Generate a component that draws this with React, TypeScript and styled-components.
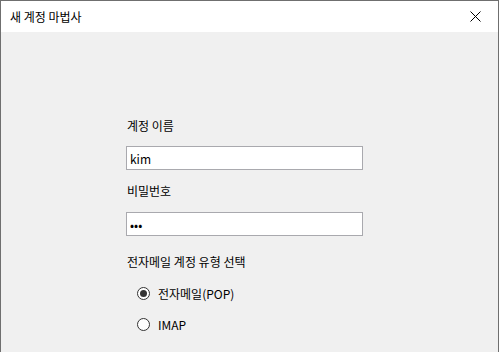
import React, { useState } from 'react';
import styled, { createGlobalStyle } from 'styled-components';

const GlobalStyle = createGlobalStyle`
  html, body {
    margin: 0;
    padding: 0;
    background: #ffffff;
  }
  * {
    box-sizing: border-box;
  }
`;

const font = `"Noto Sans CJK KR", "Noto Sans", sans-serif`;

const WindowFrame = styled.div`
  width: 499px;
  height: 352px;
  display: flex;
  flex-direction: column;
  border: 1px solid #6f6f6f;
  border-bottom: none;
  font-family: ${font};
  color: #000000;
  overflow: hidden;
`;

const TitleBar = styled.div`
  height: 31px;
  flex-shrink: 0;
  display: flex;
  align-items: center;
  justify-content: space-between;
  padding: 0 0 0 9px;
  background: #ffffff;
  font-size: 12px;
`;

const CloseButton = styled.button`
  width: 46px;
  height: 31px;
  border: none;
  background: transparent;
  display: flex;
  align-items: center;
  justify-content: center;
  padding: 0;
`;

const Body = styled.div`
  flex: 1;
  background: #f0f0f0;
  padding: 86px 0 0 125px;
`;

const Form = styled.div`
  width: 237px;
  display: flex;
  flex-direction: column;
`;

const Label = styled.div<{ $gap: number }>`
  font-size: 12px;
  line-height: 16px;
  height: 16px;
  margin-bottom: ${(p) => p.$gap}px;
  padding-left: 1px;
`;

const TextBox = styled.input<{ $gap: number }>`
  width: 237px;
  height: 24px;
  border: 1px solid #a9a9ae;
  background: #ffffff;
  font-family: ${font};
  font-size: 12px;
  padding: 0 3px;
  outline: none;
  color: #000000;
  margin-bottom: ${(p) => p.$gap}px;
`;

const RadioGroup = styled.div`
  display: flex;
  flex-direction: column;
  gap: 15px;
  padding-left: 11px;
  margin-top: 15px;
`;

const RadioRow = styled.label`
  display: flex;
  align-items: center;
  gap: 8px;
  height: 16px;
  font-size: 12px;
`;

const RadioCircle = styled.span<{ $checked: boolean }>`
  width: 13px;
  height: 13px;
  border-radius: 50%;
  border: 1px solid #333333;
  background: #ffffff;
  display: flex;
  align-items: center;
  justify-content: center;

  &::after {
    content: '';
    width: 7px;
    height: 7px;
    border-radius: 50%;
    background: ${(p) => (p.$checked ? '#333333' : 'transparent')};
  }
`;

const App: React.FC = () => {
  const [type, setType] = useState<string>('pop');

  return (
    <>
      <GlobalStyle />
      <WindowFrame>
        <TitleBar>
          <span>새 계정 마법사</span>
          <CloseButton>
            <svg width="11" height="11" viewBox="0 0 11 11">
              <path d="M0.5 0.5 L10.5 10.5 M10.5 0.5 L0.5 10.5" stroke="#000" strokeWidth="1" />
            </svg>
          </CloseButton>
        </TitleBar>
        <Body>
          <Form>
            <Label $gap={12}>계정 이름</Label>
            <TextBox $gap={13} defaultValue="kim" />
            <Label $gap={13}>비밀번호</Label>
            <TextBox $gap={18} type="password" defaultValue="•••" />
            <Label $gap={0}>전자메일 계정 유형 선택</Label>
            <RadioGroup>
              <RadioRow onClick={() => setType('pop')}>
                <RadioCircle $checked={type === 'pop'} />
                전자메일(POP)
              </RadioRow>
              <RadioRow onClick={() => setType('imap')}>
                <RadioCircle $checked={type === 'imap'} />
                IMAP
              </RadioRow>
            </RadioGroup>
          </Form>
        </Body>
      </WindowFrame>
    </>
  );
};

export default App;
